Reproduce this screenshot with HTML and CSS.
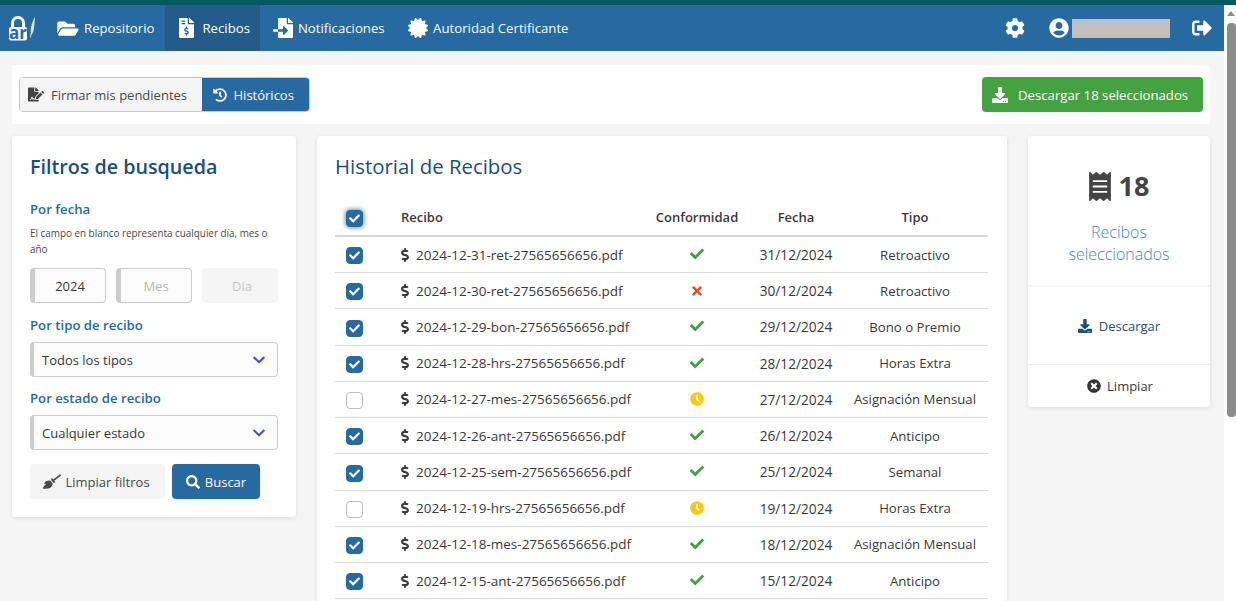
FILE: index.html
```html
<!DOCTYPE html>
<html lang="es">
<head>
    <meta charset="UTF-8">
    <meta name="viewport" content="width=device-width, initial-scale=1.0">
    <title>Historial de Recibos</title>
    <link rel="stylesheet" href="styles.css">
</head>
<body>
    <svg class="oculto" aria-hidden="true">
        <symbol id="i-folder" viewBox="0 0 576 512"><path d="M572.694 292.093L500.27 416.248A63.997 63.997 0 0 1 444.989 448H45.025c-18.523 0-30.064-20.093-20.731-36.093l72.424-124.155A64 64 0 0 1 152 256h399.964c18.523 0 30.064 20.093 20.73 36.093zM152 224h328v-48c0-26.51-21.49-48-48-48H272l-64-64H48C21.49 64 0 85.49 0 112v278.046l69.077-118.418C86.214 242.25 117.989 224 152 224z"/></symbol>
        <symbol id="i-invoice" viewBox="0 0 384 512"><path d="M377 105L279.1 7c-4.5-4.5-10.6-7-17-7H256v128h128v-6.1c0-6.3-2.5-12.4-7-16.9zm-153 31V0H24C10.7 0 0 10.7 0 24v464c0 13.3 10.7 24 24 24h336c13.3 0 24-10.7 24-24V160H248c-13.2 0-24-10.8-24-24zM64 72c0-4.42 3.58-8 8-8h80c4.42 0 8 3.58 8 8v16c0 4.42-3.58 8-8 8H72c-4.42 0-8-3.58-8-8V72zm0 80v-16c0-4.42 3.58-8 8-8h80c4.42 0 8 3.58 8 8v16c0 4.42-3.58 8-8 8H72c-4.42 0-8-3.58-8-8zm144 263.88V440c0 4.42-3.58 8-8 8h-16c-4.42 0-8-3.58-8-8v-24.29c-11.29-.58-22.27-4.52-31.37-11.35-3.9-2.93-4.1-8.77-.57-12.14l11.75-11.21c2.77-2.64 6.89-2.76 10.13-.73 3.87 2.42 8.26 3.72 12.82 3.72h28.11c6.5 0 11.8-5.92 11.8-13.19 0-5.95-3.61-11.19-8.77-12.73l-45-13.5c-18.59-5.58-31.58-23.42-31.58-43.39 0-24.52 19.05-44.44 42.67-45.07V232c0-4.42 3.58-8 8-8h16c4.42 0 8 3.58 8 8v24.29c11.29.58 22.27 4.51 31.37 11.35 3.9 2.93 4.1 8.77.57 12.14l-11.75 11.21c-2.77 2.64-6.89 2.76-10.13.73-3.87-2.43-8.26-3.72-12.82-3.72h-28.11c-6.5 0-11.8 5.92-11.8 13.19 0 5.95 3.61 11.19 8.77 12.73l45 13.5c18.59 5.58 31.58 23.42 31.58 43.39 0 24.53-19.05 44.44-42.67 45.07z"/></symbol>
        <symbol id="i-import" viewBox="0 0 512 512"><path d="M16 288c-8.8 0-16 7.2-16 16v32c0 8.8 7.2 16 16 16h112v-64zm489-183L407.1 7c-4.5-4.5-10.6-7-17-7H384v128h128v-6.1c0-6.3-2.5-12.4-7-16.9zm-153 31V0H152c-13.3 0-24 10.7-24 24v264h128v-65.2c0-14.3 17.3-21.4 27.4-11.3L379 308c6.6 6.7 6.6 17.4 0 24l-95.7 96.4c-10.1 10.1-27.4 3-27.4-11.3V352H128v136c0 13.3 10.7 24 24 24h336c13.3 0 24-10.7 24-24V160H376c-13.2 0-24-10.8-24-24z"/></symbol>
        <symbol id="i-certificate" viewBox="0 0 512 512"><path d="M458.622 255.92l45.985-45.005c13.708-12.977 7.316-36.039-10.664-40.339l-62.65-15.99 17.661-62.015c4.991-17.838-11.829-34.663-29.661-29.671l-61.994 17.667-15.984-62.671C337.085.197 313.765-6.276 300.99 7.228L256 53.57 211.011 7.229c-12.63-13.351-36.047-7.234-40.325 10.668l-15.984 62.671-61.995-17.667C74.87 57.907 58.056 74.738 63.046 92.572l17.661 62.015-62.65 15.99C.069 174.878-6.31 197.944 7.392 210.915l45.985 45.005-45.985 45.004c-13.708 12.977-7.316 36.039 10.664 40.339l62.65 15.99-17.661 62.015c-4.991 17.838 11.829 34.663 29.661 29.671l61.994-17.667 15.984 62.671c4.439 18.575 27.696 24.018 40.325 10.668L256 458.61l44.989 46.001c12.5 13.488 35.987 7.486 40.325-10.668l15.984-62.671 61.994 17.667c17.836 4.994 34.651-11.837 29.661-29.671l-17.661-62.015 62.65-15.99c17.987-4.302 24.366-27.367 10.664-40.339l-45.984-45.004z"/></symbol>
        <symbol id="i-cog" viewBox="0 0 512 512"><path d="M487.4 315.7l-42.6-24.6c4.3-23.2 4.3-47 0-70.2l42.6-24.6c4.9-2.8 7.1-8.6 5.5-14-11.1-35.6-30-67.8-54.7-94.6-3.8-4.1-10-5.1-14.8-2.3L380.8 110c-17.9-15.4-38.5-27.3-60.8-35.1V25.8c0-5.6-3.9-10.5-9.4-11.7-36.7-8.2-74.3-7.8-109.2 0-5.5 1.2-9.4 6.1-9.4 11.7V75c-22.2 7.9-42.8 19.8-60.8 35.1L88.7 85.5c-4.9-2.8-11-1.9-14.8 2.3-24.7 26.7-43.6 58.9-54.7 94.6-1.7 5.4.6 11.2 5.5 14L67.3 221c-4.3 23.2-4.3 47 0 70.2l-42.6 24.6c-4.9 2.8-7.1 8.6-5.5 14 11.1 35.6 30 67.8 54.7 94.6 3.8 4.1 10 5.1 14.8 2.3l42.6-24.6c17.9 15.4 38.5 27.3 60.8 35.1v49.2c0 5.6 3.9 10.5 9.4 11.7 36.7 8.2 74.3 7.8 109.2 0 5.5-1.2 9.4-6.1 9.4-11.7v-49.2c22.2-7.9 42.8-19.8 60.8-35.1l42.6 24.6c4.9 2.8 11 1.9 14.8-2.3 24.7-26.7 43.6-58.9 54.7-94.6 1.5-5.5-.7-11.3-5.6-14.1zM256 336c-44.1 0-80-35.9-80-80s35.9-80 80-80 80 35.9 80 80-35.9 80-80 80z"/></symbol>
        <symbol id="i-user" viewBox="0 0 496 512"><path d="M248 8C111 8 0 119 0 256s111 248 248 248 248-111 248-248S385 8 248 8zm0 96c48.6 0 88 39.4 88 88s-39.4 88-88 88-88-39.4-88-88 39.4-88 88-88zm0 344c-58.7 0-111.3-26.6-146.5-68.2 18.8-35.4 55.6-59.8 98.5-59.8 2.4 0 4.8.4 7.1 1.1 13 4.2 26.6 6.9 40.9 6.9 14.3 0 28-2.7 40.9-6.9 2.3-.7 4.7-1.1 7.1-1.1 42.9 0 79.7 24.4 98.5 59.8C359.3 421.4 306.7 448 248 448z"/></symbol>
        <symbol id="i-salir" viewBox="0 0 512 512"><path d="M497 273L329 441c-15 15-41 4.5-41-17v-96H152c-13.3 0-24-10.7-24-24v-96c0-13.3 10.7-24 24-24h136V88c0-21.4 25.9-32 41-17l168 168c9.3 9.4 9.3 24.6 0 34zM192 436v-40c0-6.6-5.4-12-12-12H96c-17.7 0-32-14.3-32-32V160c0-17.7 14.3-32 32-32h84c6.6 0 12-5.4 12-12V76c0-6.6-5.4-12-12-12H96c-53 0-96 43-96 96v192c0 53 43 96 96 96h84c6.6 0 12-5.4 12-12z"/></symbol>
        <symbol id="i-download" viewBox="0 0 512 512"><path d="M216 0h80c13.3 0 24 10.7 24 24v168h87.7c17.8 0 26.7 21.5 14.1 34.1L269.7 378.3c-7.5 7.5-19.8 7.5-27.3 0L90.1 226.1c-12.6-12.6-3.7-34.1 14.1-34.1H192V24c0-13.3 10.7-24 24-24zm296 376v112c0 13.3-10.7 24-24 24H24c-13.3 0-24-10.7-24-24V376c0-13.3 10.7-24 24-24h146.7l49 49c20.1 20.1 52.5 20.1 72.6 0l49-49H488c13.3 0 24 10.7 24 24zm-124 88c0-11-9-20-20-20s-20 9-20 20 9 20 20 20 20-9 20-20zm64 0c0-11-9-20-20-20s-20 9-20 20 9 20 20 20 20-9 20-20z"/></symbol>
        <symbol id="i-search" viewBox="0 0 512 512"><path d="M505 442.7L405.3 343c-4.5-4.5-10.6-7-17-7H372c27.6-35.3 44-79.7 44-128C416 93.1 322.9 0 208 0S0 93.1 0 208s93.1 208 208 208c48.3 0 92.7-16.4 128-44v16.3c0 6.4 2.5 12.5 7 17l99.7 99.7c9.4 9.4 24.6 9.4 33.9 0l28.3-28.3c9.4-9.4 9.4-24.6.1-34zM208 336c-70.7 0-128-57.2-128-128 0-70.7 57.2-128 128-128 70.7 0 128 57.2 128 128 0 70.7-57.2 128-128 128z"/></symbol>
        <symbol id="i-check" viewBox="0 0 512 512"><path d="M173.898 439.404l-166.4-166.4c-9.997-9.997-9.997-26.206 0-36.204l36.203-36.204c9.997-9.998 26.207-9.998 36.204 0L192 312.69 432.095 72.596c9.997-9.997 26.207-9.997 36.204 0l36.203 36.204c9.997 9.997 9.997 26.206 0 36.204l-294.4 294.401c-9.998 9.997-26.207 9.997-36.204-.001z"/></symbol>
        <symbol id="i-times" viewBox="0 0 352 512"><path d="M242.72 256l100.07-100.07c12.28-12.28 12.28-32.19 0-44.48l-22.24-22.24c-12.28-12.28-32.19-12.28-44.48 0L176 189.28 75.93 89.21c-12.28-12.28-32.19-12.28-44.48 0L9.21 111.45c-12.28 12.28-12.28 32.19 0 44.48L109.28 256 9.21 356.07c-12.28 12.28-12.28 32.19 0 44.48l22.24 22.24c12.28 12.28 32.2 12.28 44.48 0L176 322.72l100.07 100.07c12.28 12.28 32.2 12.28 44.48 0l22.24-22.24c12.28-12.28 12.28-32.19 0-44.48L242.72 256z"/></symbol>
        <symbol id="i-clock" viewBox="0 0 512 512"><path d="M256,8C119,8,8,119,8,256S119,504,256,504,504,393,504,256,393,8,256,8Zm92.49,313h0l-20,25a16,16,0,0,1-22.49,2.5h0l-67-49.72a40,40,0,0,1-15-31.23V112a16,16,0,0,1,16-16h32a16,16,0,0,1,16,16V256l58,42.5A16,16,0,0,1,348.49,321Z"/></symbol>
        <symbol id="i-times-circle" viewBox="0 0 512 512"><path d="M256 8C119 8 8 119 8 256s111 248 248 248 248-111 248-248S393 8 256 8zm121.6 313.1c4.7 4.7 4.7 12.3 0 17L338 377.6c-4.7 4.7-12.3 4.7-17 0L256 312l-65.1 65.6c-4.7 4.7-12.3 4.7-17 0L134.4 338c-4.7-4.7-4.7-12.3 0-17l65.6-65-65.6-65.1c-4.7-4.7-4.7-12.3 0-17l39.6-39.6c4.7-4.7 12.3-4.7 17 0l65 65.7 65.1-65.6c4.7-4.7 12.3-4.7 17 0l39.6 39.6c4.7 4.7 4.7 12.3 0 17L312 256l65.6 65.1z"/></symbol>
        <symbol id="i-chevron" viewBox="0 0 448 512"><path d="M207.029 381.476L12.686 187.132c-9.373-9.373-9.373-24.569 0-33.941l22.667-22.667c9.357-9.357 24.522-9.375 33.901-.04L224 284.505l154.745-154.021c9.379-9.335 24.544-9.317 33.901.04l22.667 22.667c9.373 9.373 9.373 24.569 0 33.941L240.971 381.476c-9.373 9.372-24.569 9.372-33.942 0z"/></symbol>
        <symbol id="i-dollar" viewBox="0 0 288 512"><path d="M209.2 233.4l-108-31.6C88.7 198.2 80 186.5 80 173.5c0-16.3 13.2-29.5 29.5-29.5h66.3c12.2 0 24.2 3.7 34.2 10.5 6.1 4.1 14.3 3.1 19.5-2l34.8-34c7.1-6.9 6.1-18.4-1.8-24.5C238 74.8 207.4 64.1 176 64V16c0-8.8-7.2-16-16-16h-32c-8.8 0-16 7.2-16 16v48h-2.5C45.8 64-5.4 118.7.5 183.6c4.2 46.1 39.4 83.6 83.8 96.6l102.5 30c12.5 3.7 21.2 15.3 21.2 28.3 0 16.3-13.2 29.5-29.5 29.5h-66.3C100 368 88 364.3 78 357.5c-6.1-4.1-14.3-3.1-19.5 2l-34.8 34c-7.1 6.9-6.1 18.4 1.8 24.5 24.5 19.2 55.1 29.9 86.5 30v48c0 8.8 7.2 16 16 16h32c8.8 0 16-7.2 16-16v-48.2c46.6-.9 90.3-28.6 105.7-72.7 21.5-61.6-14.6-124.8-72.5-141.7z"/></symbol>
        <symbol id="i-history" viewBox="0 0 512 512"><path d="M504 255.531c.253 136.64-111.18 248.372-247.82 248.468-59.015.042-113.223-20.53-155.822-54.911-11.077-8.94-11.905-25.541-1.839-35.607l11.267-11.267c8.609-8.609 22.353-9.551 31.891-1.984C173.062 425.135 212.781 440 256 440c101.705 0 184-82.311 184-184 0-101.705-82.311-184-184-184-48.814 0-93.149 18.969-126.068 49.932l50.754 50.754c10.08 10.08 2.941 27.314-11.313 27.314H24c-8.837 0-16-7.163-16-16V38.627c0-14.254 17.234-21.393 27.314-11.314l49.372 49.372C129.209 34.136 189.552 8 256 8c136.81 0 247.747 110.78 248 247.531zm-180.912 78.784l9.823-12.63c8.138-10.463 6.253-25.542-4.21-33.679L288 256.349V152c0-13.255-10.745-24-24-24h-16c-13.255 0-24 10.745-24 24v135.651l65.409 50.874c10.463 8.137 25.541 6.253 33.679-4.21z"/></symbol>
        <symbol id="i-receipt" viewBox="0 0 384 512"><path d="M358.4 3.2L320 48 265.6 3.2a15.9 15.9 0 0 0-19.2 0L192 48 137.6 3.2a15.9 15.9 0 0 0-19.2 0L64 48 25.6 3.2C15-4.7 0 2.8 0 16v480c0 13.2 15 20.7 25.6 12.8L64 464l54.4 44.8a15.9 15.9 0 0 0 19.2 0L192 464l54.4 44.8a15.9 15.9 0 0 0 19.2 0L320 464l38.4 44.8c10.5 7.9 25.6.4 25.6-12.8V16c0-13.2-15-20.7-25.6-12.8zM320 360c0 4.4-3.6 8-8 8H72c-4.4 0-8-3.6-8-8v-16c0-4.4 3.6-8 8-8h240c4.4 0 8 3.6 8 8v16zm0-96c0 4.4-3.6 8-8 8H72c-4.4 0-8-3.6-8-8v-16c0-4.4 3.6-8 8-8h240c4.4 0 8 3.6 8 8v16zm0-96c0 4.4-3.6 8-8 8H72c-4.4 0-8-3.6-8-8v-16c0-4.4 3.6-8 8-8h240c4.4 0 8 3.6 8 8v16z"/></symbol>
        <symbol id="i-firma" viewBox="0 0 576 512"><path d="M218.17 424.14c-2.95-5.92-8.09-6.52-10.17-6.52s-7.22.59-10.02 6.19l-7.67 15.34c-6.37 12.78-25.03 11.37-29.48-2.09L144 386.59l-10.61 31.88c-5.89 17.66-22.38 29.53-41 29.53H80c-8.84 0-16-7.16-16-16s7.16-16 16-16h12.39c4.83 0 9.11-3.08 10.64-7.66l18.19-54.64c3.3-9.81 12.44-16.41 22.78-16.41s19.48 6.59 22.77 16.41l13.88 41.64c19.75-16.19 54.06-9.7 66 14.16 1.89 3.78 5.49 5.95 9.36 6.26v-82.12l128-127.09V160H248c-13.2 0-24-10.8-24-24V0H24C10.7 0 0 10.7 0 24v464c0 13.3 10.7 24 24 24h336c13.3 0 24-10.7 24-24v-40l-128-.11c-16.12-.31-30.58-9.28-37.83-23.75zM384 121.9c0-6.3-2.5-12.4-7-16.9L279.1 7c-4.5-4.5-10.6-7-17-7H256v128h128v-6.1zm-96 225.06V416h68.99l161.68-162.78-67.88-67.88L288 346.96zm280.54-179.63l-31.87-31.87c-9.94-9.94-26.07-9.94-36.01 0l-27.25 27.25 67.88 67.88 27.25-27.25c9.95-9.94 9.95-26.07 0-36.01z"/></symbol>
        <symbol id="i-broom" viewBox="0 0 640 512"><path d="M256.47 216.77l86.73 109.18s-16.6 102.36-76.57 150.12C206.66 523.85 0 510.19 0 510.19s3.8-23.14 11-55.43l94.62-112.17c3.97-4.7-.87-11.62-6.65-9.5l-60.4 22.09c14.44-41.66 32.72-80.04 54.6-97.47 59.97-47.76 163.3-40.94 163.3-40.94zM636.53 31.03l-19.86-25c-5.49-6.9-15.52-8.05-22.41-2.56l-232.48 177.8-34.14-42.97c-5.09-6.41-15.14-5.21-18.59 2.21l-25.33 54.55 86.73 109.18 58.8-12.45c8-1.69 11.42-11.2 6.34-17.6l-34.09-42.92 232.48-177.8c6.89-5.48 8.04-15.53 2.55-22.44z"/></symbol>
    </svg>

    <div class="franja"></div>
    <div class="ventana">
        <div class="pagina">
            <nav class="navbar">
                <svg class="logo" viewBox="0 0 30 27">
                    <path class="logo-blanco" d="M3 13V8a7 7 0 0 1 14 0v5h-3V8a4 4 0 0 0-8 0v5z"/>
                    <rect class="logo-blanco" x="1" y="12" width="18" height="13.500" rx="2"/>
                    <text class="logo-texto" x="10" y="23.500">ar</text>
                    <path class="logo-plumita" d="M27.500 1.500c-.8 1-1.600 2-2.200 3l.6.500-1 .5.300 1-1 .6.200 1.200-.9.700.2 1.400-.7.800.2 1.600-.5.900.3 1.700-.4 1 .3 1.600-.5 1.200-.5 3.500h.7l.8-3c1.300-1.200 2-3 2.400-5 .3-1.500.2-3 .5-4.500.3-2.500.6-5 .7-7.600z"/>
                </svg>
                <a class="nav-item"><svg class="ico ico-folder"><use href="#i-folder"/></svg>Repositorio</a>
                <a class="nav-item nav-recibos"><svg class="ico ico-archivo"><use href="#i-invoice"/></svg>Recibos</a>
                <a class="nav-item nav-notif"><svg class="ico ico-import"><use href="#i-import"/></svg>Notificaciones</a>
                <a class="nav-item nav-cert"><svg class="ico ico-cert"><use href="#i-certificate"/></svg>Autoridad Certificante</a>
                <div class="nav-derecha">
                    <svg class="ico ico-cog"><use href="#i-cog"/></svg>
                    <svg class="ico ico-user"><use href="#i-user"/></svg>
                    <span class="usuario-oculto"></span>
                    <svg class="ico ico-salir"><use href="#i-salir"/></svg>
                </div>
            </nav>

            <div class="contenedor">
                <div class="barra">
                    <div class="grupo">
                        <button class="btn-grupo"><svg class="ico ico-firma"><use href="#i-firma"/></svg>Firmar mis pendientes</button>
                        <button class="btn-grupo activo"><svg class="ico ico-history"><use href="#i-history"/></svg>Históricos</button>
                    </div>
                    <button class="btn-verde"><svg class="ico ico-bajar"><use href="#i-download"/></svg>Descargar 18 seleccionados</button>
                </div>

                <div class="columnas">
                    <aside class="tarjeta filtros">
                        <h2>Filtros de busqueda</h2>
                        <h3>Por fecha</h3>
                        <p class="ayuda">El campo en blanco representa cualquier día, mes o año</p>
                        <div class="fechas">
                            <div class="campo">2024</div>
                            <div class="campo vacio">Mes</div>
                            <div class="campo deshabilitado">Dia</div>
                        </div>
                        <h3>Por tipo de recibo</h3>
                        <div class="selector">Todos los tipos<svg class="ico ico-chevron"><use href="#i-chevron"/></svg></div>
                        <h3>Por estado de recibo</h3>
                        <div class="selector">Cualquier estado<svg class="ico ico-chevron"><use href="#i-chevron"/></svg></div>
                        <div class="acciones">
                            <button class="btn-gris"><svg class="ico ico-broom"><use href="#i-broom"/></svg>Limpiar filtros</button>
                            <button class="btn-azul"><svg class="ico ico-search"><use href="#i-search"/></svg>Buscar</button>
                        </div>
                    </aside>

                    <main class="tarjeta historial">
                        <h2>Historial de Recibos</h2>
                        <table class="tabla">
                            <thead>
                                <tr>
                                    <th class="col-check"><span class="casilla marcada foco"><svg><use href="#i-check"/></svg></span></th>
                                    <th class="col-recibo">Recibo</th>
                                    <th class="col-conf">Conformidad</th>
                                    <th class="col-fecha">Fecha</th>
                                    <th>Tipo</th>
                                </tr>
                            </thead>
                            <tbody>
                                <tr>
                                    <td class="col-check"><span class="casilla marcada"><svg><use href="#i-check"/></svg></span></td>
                                    <td class="col-recibo"><svg class="ico ico-dolar"><use href="#i-dollar"/></svg>2024-12-31-ret-27565656656.pdf</td>
                                    <td class="col-conf"><svg class="ico est-ok"><use href="#i-check"/></svg></td>
                                    <td class="col-fecha">31/12/2024</td>
                                    <td>Retroactivo</td>
                                </tr>
                                <tr>
                                    <td class="col-check"><span class="casilla marcada"><svg><use href="#i-check"/></svg></span></td>
                                    <td class="col-recibo"><svg class="ico ico-dolar"><use href="#i-dollar"/></svg>2024-12-30-ret-27565656656.pdf</td>
                                    <td class="col-conf"><svg class="ico est-no"><use href="#i-times"/></svg></td>
                                    <td class="col-fecha">30/12/2024</td>
                                    <td>Retroactivo</td>
                                </tr>
                                <tr>
                                    <td class="col-check"><span class="casilla marcada"><svg><use href="#i-check"/></svg></span></td>
                                    <td class="col-recibo"><svg class="ico ico-dolar"><use href="#i-dollar"/></svg>2024-12-29-bon-27565656656.pdf</td>
                                    <td class="col-conf"><svg class="ico est-ok"><use href="#i-check"/></svg></td>
                                    <td class="col-fecha">29/12/2024</td>
                                    <td>Bono o Premio</td>
                                </tr>
                                <tr>
                                    <td class="col-check"><span class="casilla marcada"><svg><use href="#i-check"/></svg></span></td>
                                    <td class="col-recibo"><svg class="ico ico-dolar"><use href="#i-dollar"/></svg>2024-12-28-hrs-27565656656.pdf</td>
                                    <td class="col-conf"><svg class="ico est-ok"><use href="#i-check"/></svg></td>
                                    <td class="col-fecha">28/12/2024</td>
                                    <td>Horas Extra</td>
                                </tr>
                                <tr>
                                    <td class="col-check"><span class="casilla"></span></td>
                                    <td class="col-recibo"><svg class="ico ico-dolar"><use href="#i-dollar"/></svg>2024-12-27-mes-27565656656.pdf</td>
                                    <td class="col-conf"><svg class="ico est-espera"><use href="#i-clock"/></svg></td>
                                    <td class="col-fecha">27/12/2024</td>
                                    <td>Asignación Mensual</td>
                                </tr>
                                <tr>
                                    <td class="col-check"><span class="casilla marcada"><svg><use href="#i-check"/></svg></span></td>
                                    <td class="col-recibo"><svg class="ico ico-dolar"><use href="#i-dollar"/></svg>2024-12-26-ant-27565656656.pdf</td>
                                    <td class="col-conf"><svg class="ico est-ok"><use href="#i-check"/></svg></td>
                                    <td class="col-fecha">26/12/2024</td>
                                    <td>Anticipo</td>
                                </tr>
                                <tr>
                                    <td class="col-check"><span class="casilla marcada"><svg><use href="#i-check"/></svg></span></td>
                                    <td class="col-recibo"><svg class="ico ico-dolar"><use href="#i-dollar"/></svg>2024-12-25-sem-27565656656.pdf</td>
                                    <td class="col-conf"><svg class="ico est-ok"><use href="#i-check"/></svg></td>
                                    <td class="col-fecha">25/12/2024</td>
                                    <td>Semanal</td>
                                </tr>
                                <tr>
                                    <td class="col-check"><span class="casilla"></span></td>
                                    <td class="col-recibo"><svg class="ico ico-dolar"><use href="#i-dollar"/></svg>2024-12-19-hrs-27565656656.pdf</td>
                                    <td class="col-conf"><svg class="ico est-espera"><use href="#i-clock"/></svg></td>
                                    <td class="col-fecha">19/12/2024</td>
                                    <td>Horas Extra</td>
                                </tr>
                                <tr>
                                    <td class="col-check"><span class="casilla marcada"><svg><use href="#i-check"/></svg></span></td>
                                    <td class="col-recibo"><svg class="ico ico-dolar"><use href="#i-dollar"/></svg>2024-12-18-mes-27565656656.pdf</td>
                                    <td class="col-conf"><svg class="ico est-ok"><use href="#i-check"/></svg></td>
                                    <td class="col-fecha">18/12/2024</td>
                                    <td>Asignación Mensual</td>
                                </tr>
                                <tr>
                                    <td class="col-check"><span class="casilla marcada"><svg><use href="#i-check"/></svg></span></td>
                                    <td class="col-recibo"><svg class="ico ico-dolar"><use href="#i-dollar"/></svg>2024-12-15-ant-27565656656.pdf</td>
                                    <td class="col-conf"><svg class="ico est-ok"><use href="#i-check"/></svg></td>
                                    <td class="col-fecha">15/12/2024</td>
                                    <td>Anticipo</td>
                                </tr>
                            </tbody>
                        </table>
                    </main>

                    <aside class="tarjeta resumen">
                        <div class="resumen-total">
                            <div class="total"><svg class="ico ico-recibo"><use href="#i-receipt"/></svg>18</div>
                            <p class="total-texto">Recibos seleccionados</p>
                        </div>
                        <a class="resumen-descargar"><svg class="ico ico-bajar-azul"><use href="#i-download"/></svg>Descargar</a>
                        <a class="resumen-limpiar"><svg class="ico ico-limpiar"><use href="#i-times-circle"/></svg>Limpiar</a>
                    </aside>
                </div>
            </div>
        </div>
        <div class="scrollbar">
            <span class="flecha"></span>
            <span class="thumb"></span>
        </div>
    </div>
</body>
</html>
```

FILE: styles.css
```css
* {
    box-sizing: border-box;
}

html, body {
    height: 100%;
    overflow: hidden;
}

body {
    margin: 0;
    font-family: 'Open Sans', sans-serif;
    font-size: 13.2px;
    color: #3a3a3a;
    background-color: #f5f5f5;
    display: flex;
    flex-direction: column;
}

button {
    font-family: inherit;
    font-size: 13px;
    border: none;
    cursor: pointer;
}

.oculto {
    display: none;
}

.ico {
    fill: currentColor;
    flex: none;
}

.franja {
    height: 5px;
    background-color: #045a5f;
}

.ventana {
    flex: 1;
    display: flex;
    min-height: 0;
}

.pagina {
    flex: 1;
    min-width: 0;
    overflow: hidden;
}

/* barra de navegacion */
.navbar {
    height: 46px;
    background-color: #266aa1;
    color: white;
    display: flex;
    align-items: stretch;
    padding-left: 8px;
}

.logo {
    width: 30px;
    height: 27px;
    align-self: center;
    margin-right: 8px;
}

.logo-blanco {
    fill: white;
}

.logo-plumita {
    fill: #d9e6f1;
}

.logo-texto {
    fill: #266aa1;
    font-family: 'Open Sans', sans-serif;
    font-size: 17px;
    font-weight: 700;
    text-anchor: middle;
}

.nav-item {
    display: flex;
    align-items: center;
    padding: 0 11px;
    font-size: 13.2px;
}

.nav-recibos {
    padding: 0 10px 0 14px;
    background-color: #235b8a;
}

.nav-notif {
    padding-left: 13px;
}

.nav-cert {
    padding-left: 12px;
}

.ico-folder {
    width: 22px;
    height: 19px;
    margin-right: 5px;
}

.ico-archivo {
    width: 15px;
    height: 20px;
    margin-right: 8px;
}

.ico-import {
    width: 20px;
    height: 20px;
    margin-right: 5px;
}

.ico-cert {
    width: 20px;
    height: 20px;
    margin-right: 5.500px;
}

.nav-derecha {
    margin-left: auto;
    display: flex;
    align-items: center;
    padding-right: 12px;
}

.ico-cog {
    width: 20px;
    height: 20px;
    margin-right: 24px;
}

.ico-user {
    width: 20px;
    height: 20px;
    margin-right: 3px;
}

.usuario-oculto {
    width: 98px;
    height: 19px;
    background-color: #c0c0c0;
    margin-right: 22px;
}

.ico-salir {
    width: 20px;
    height: 20px;
}

/* contenido */
.contenedor {
    padding: 14px 14px 0 12px;
}

.barra {
    height: 59px;
    background-color: white;
    display: flex;
    align-items: center;
    justify-content: space-between;
    padding: 0 7px;
    margin-bottom: 12px;
}

.grupo {
    display: flex;
    height: 35px;
    border: 1px solid #c8c8c8;
    border-radius: 4px;
    overflow: hidden;
}

.btn-grupo {
    display: flex;
    align-items: center;
    padding: 0 14.500px 0 8px;
    background-color: #f5f5f5;
    color: #4a4a4a;
    font-size: 13px;
}

.btn-grupo.activo {
    background-color: #266aa1;
    color: white;
    padding: 0 15px 0 11px;
}

.ico-firma {
    width: 16px;
    height: 15px;
    margin-right: 7px;
    color: #444;
}

.ico-history {
    width: 14px;
    height: 14px;
    margin-right: 7px;
}

.btn-verde {
    width: 221px;
    height: 35px;
    padding: 0 0 0 10px;
    background-color: #44a340;
    color: white;
    border-radius: 4px;
    display: flex;
    align-items: center;
    gap: 10px;
    font-size: 13.2px;
}

.ico-bajar {
    width: 16px;
    height: 16px;
}

.columnas {
    display: flex;
    align-items: flex-start;
    gap: 21px;
}

.tarjeta {
    background-color: white;
    box-shadow: 0 1px 4px rgba(0, 0, 0, 0.1);
    border-radius: 3px;
}

/* filtros */
.filtros {
    width: 284px;
    padding: 18px;
    flex: none;
}

.filtros h2 {
    margin: 0 0 20px;
    font-size: 19.7px;
    line-height: 26px;
    font-weight: 600;
    color: #1a4f7c;
}

.filtros h3 {
    margin: 0;
    font-size: 13.2px;
    line-height: 18px;
    font-weight: 600;
    color: #266aa1;
}

.ayuda {
    margin: 7px 0 11px;
    font-size: 9.9px;
    line-height: 16px;
    color: #4a4a4a;
}

.fechas {
    display: flex;
    gap: 10px;
    margin-bottom: 13px;
}

.campo {
    flex: 1;
    height: 35px;
    border: 1px solid #cdcdcd;
    border-left: 5px solid #cdcdcd;
    border-radius: 4px;
    background-color: #fcfcfc;
    display: flex;
    align-items: center;
    justify-content: center;
    font-size: 13px;
}

.campo.vacio {
    color: #b8b8b8;
}

.campo.deshabilitado {
    background-color: #f5f5f5;
    border-color: #f5f5f5;
    color: #c8c8c8;
}

.selector {
    height: 35px;
    margin: 8px 0 12px;
    border: 1px solid #cdcdcd;
    border-left: 4px solid #cdcdcd;
    border-radius: 4px;
    background-color: #fcfcfc;
    display: flex;
    align-items: center;
    justify-content: space-between;
    padding: 0 12px 0 8px;
    font-size: 13px;
}

.ico-chevron {
    width: 12px;
    height: 14px;
    color: #4355c4;
}

.acciones {
    display: flex;
    gap: 7px;
    margin-top: 14px;
}

.btn-gris, .btn-azul {
    height: 35px;
    border-radius: 4px;
    display: flex;
    align-items: center;
    justify-content: center;
}

.btn-gris {
    width: 135px;
    padding: 0 2px 0 0;
    background-color: #f5f5f5;
    color: #4a4a4a;
}

.ico-broom {
    width: 18px;
    height: 15px;
    margin-right: 4px;
}

.btn-azul {
    width: 88px;
    background-color: #266aa1;
    color: white;
}

.ico-search {
    width: 14px;
    height: 14px;
    margin-right: 5px;
}

/* tabla */
.historial {
    width: 690px;
    padding: 17px 19px 24px 18px;
    flex: none;
}

.historial h2 {
    margin: 0 0 21px;
    font-size: 20.4px;
    line-height: 26px;
    font-weight: 500;
    color: #1a4f7c;
}

.tabla {
    width: 100%;
    border-collapse: collapse;
    table-layout: fixed;
}

.tabla th {
    height: 36.3px;
    padding: 0 0 2px;
    font-size: 13px;
    font-weight: 600;
    text-align: center;
    border-bottom: 2px solid #d8d8d8;
}

.tabla td {
    height: 36.25px;
    padding: 0;
    text-align: center;
    border-bottom: 1px solid #dcdcdc;
}

.tabla .col-check {
    width: 40px;
    padding: 0 2px 0 0;
}

.tabla .col-recibo {
    width: 269px;
    text-align: left;
    padding-left: 26px;
}

.tabla td.col-recibo {
    font-size: 13.5px;
}

.col-conf {
    width: 106px;
}

.col-fecha {
    width: 92px;
}

.tabla td.col-fecha {
    font-size: 13.7px;
}

.casilla {
    display: inline-flex;
    align-items: center;
    justify-content: center;
    width: 17px;
    height: 17px;
    margin-top: 1px;
    border: 1px solid #bdbdbd;
    border-radius: 4px;
    background-color: white;
    vertical-align: middle;
}

.casilla.marcada {
    background-color: #266aa1;
    border-color: #266aa1;
    color: white;
}

.casilla.foco {
    box-shadow: 0 0 4px 1px rgba(38, 106, 161, 0.7);
}

.casilla svg {
    width: 11px;
    height: 11px;
    fill: currentColor;
}

.ico-dolar {
    width: 8px;
    height: 14px;
    margin-right: 7px;
    vertical-align: -2px;
}

.est-ok, .est-no, .est-espera {
    display: block;
    height: 14px;
    margin: -1px auto 0;
}

.est-ok {
    width: 14px;
    color: #43a047;
}

.est-no {
    width: 10px;
    margin-top: 0;
    color: #e04f2d;
}

.est-espera {
    width: 14px;
    color: #fdc90f;
}

/* resumen */
.resumen {
    width: 182px;
    flex: none;
    border-radius: 4px;
    text-align: center;
}

.resumen-total {
    height: 151px;
    padding-top: 34px;
    border-bottom: 2px solid #f5f5f5;
}

.total {
    font-size: 27px;
    line-height: 32px;
    font-weight: 700;
    color: #444;
    display: flex;
    align-items: center;
    justify-content: center;
}

.ico-recibo {
    width: 22px;
    height: 29px;
    margin-right: 8px;
}

.total-texto {
    margin: 19px auto 0;
    width: 120px;
    font-size: 16px;
    line-height: 22px;
    font-weight: 300;
    color: #4f87bd;
}

.resumen-descargar, .resumen-limpiar {
    display: flex;
    align-items: center;
    justify-content: center;
    font-size: 13px;
}

.resumen-descargar {
    height: 78px;
    color: #1f4f7b;
    border-bottom: 1px solid #ededed;
}

.ico-bajar-azul {
    width: 14px;
    height: 14px;
    margin-right: 7px;
}

.resumen-limpiar {
    height: 42px;
    padding-left: 2px;
}

.ico-limpiar {
    width: 14px;
    height: 14px;
    margin-right: 6px;
    color: #333;
}

/* scrollbar */
.scrollbar {
    width: 12px;
    background-color: white;
    position: relative;
}

.flecha {
    position: absolute;
    top: 6px;
    left: 3px;
    border-left: 4px solid transparent;
    border-right: 4px solid transparent;
    border-bottom: 5px solid #8c8c8c;
}

.thumb {
    position: absolute;
    top: 18px;
    left: 3px;
    width: 9px;
    height: 394px;
    background-color: #8c8c8c;
    border-radius: 4px;
}
```
